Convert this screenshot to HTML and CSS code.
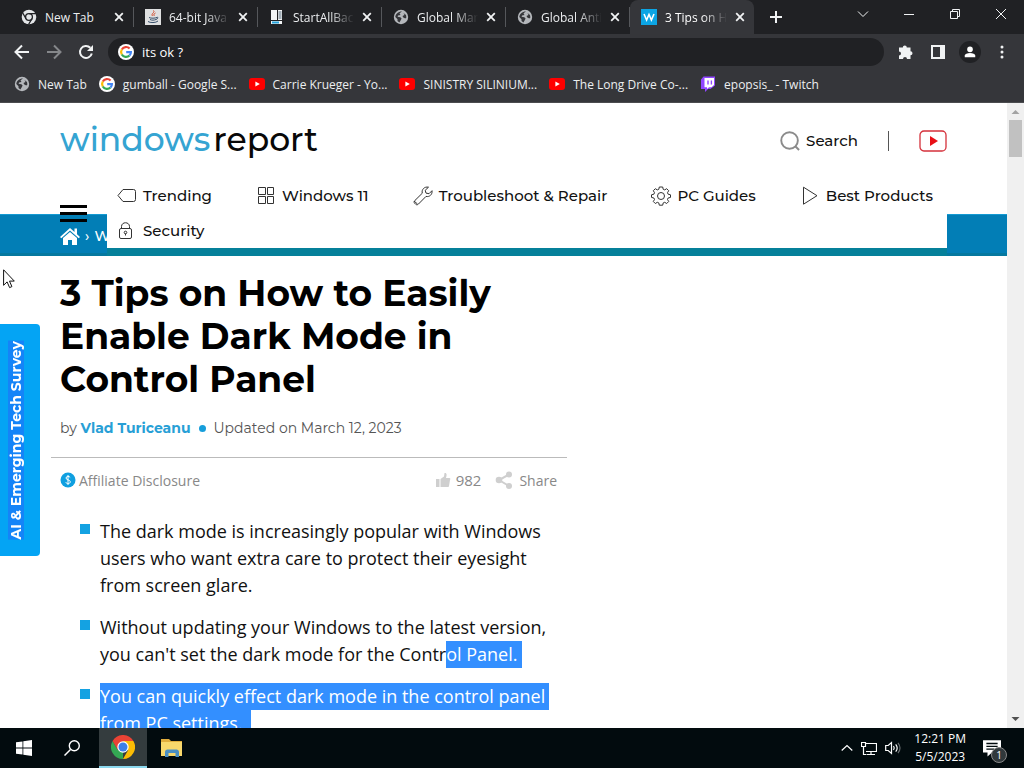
FILE: index.html
```html
<!DOCTYPE html>
<html lang="en">
<head>
<meta charset="utf-8">
<title>3 Tips on How to Easily Enable Dark Mode in Control Panel</title>
<link rel="stylesheet" href="styles.css">
</head>
<body>
<svg class="defs" aria-hidden="true">
  <symbol id="close" viewBox="0 0 10 10"><path d="M1.2 1.2 8.8 8.8M8.8 1.2 1.2 8.8" stroke="#f1f3f4" stroke-width="1.8" fill="none"/></symbol>
  <symbol id="globe" viewBox="0 0 16 16"><circle cx="8" cy="8" r="7.2" fill="#b4b7bb"/><path d="M9 2.500 6.500 4.200 7.500 6 5 6.500 4.600 7.800 7.400 8.200 8.600 9.600 7.600 11.600 6.400 13.500 4.500 12 4.500 10.200 2.300 8C2.500 5 5 2.500 9 2.500ZM10.500 4 13 6 13.400 8.500 12.300 9.500 10.300 8.400 9.500 7 11.500 6Z" fill="#35363a"/></symbol>
  <symbol id="google" viewBox="0 0 16 16"><circle cx="8" cy="8" r="8" fill="#fff"/><g fill="none" stroke-width="2.200"><path d="M11.600 4.500A4.900 4.900 0 0 0 3.800 5.500" stroke="#ea4335"/><path d="M3.800 5.500A4.900 4.900 0 0 0 3.800 10.500" stroke="#fbbc05"/><path d="M3.800 10.500A4.900 4.900 0 0 0 11.500 11.500" stroke="#34a853"/><path d="M11.500 11.500A4.900 4.900 0 0 0 12.900 8.200H8.200" stroke="#4285f4"/></g></symbol>
  <symbol id="youtube" viewBox="0 0 16 16"><rect y="2" width="16" height="12" rx="3" fill="#f00"/><path d="M6.400 5.500v5L10.800 8Z" fill="#fff"/></symbol>
</svg>

<header class="browser">
  <div class="tabstrip">
    <nav class="tabs" aria-label="Tabs">
      <div class="tab"><svg class="i16" viewBox="0 0 16 16"><circle cx="8" cy="8" r="7.300" fill="#e4e6e8"/><circle cx="8" cy="8" r="3.400" fill="#e4e6e8" stroke="#202124" stroke-width="1.300"/><path d="M8 4.600H15M5 9.700 1.600 3.800M11 9.700 7.500 15.500" stroke="#202124" stroke-width="1.300"/></svg><span class="tab-title">New Tab</span><button aria-label="Close tab"><svg viewBox="0 0 10 10"><use href="#close"/></svg></button></div>
      <div class="tab"><svg class="i16" viewBox="0 0 16 16"><path fill="#dfe0e1" d="M0 0h16v16H0z"/><path d="M8.500 1.500c2 2-3 3-1 5.500M10.500 4c-2 1-2 2-1 3" stroke="#d3492a" fill="none"/><path d="M4 8.500c2 1 6 .8 8 0M5 10.500c2 1 4 .8 6 0M3 12.500c2 1.500 8 1.500 10-.5M11.500 8.500c2-.8 2 1-.5 2" stroke="#39516c" fill="none"/></svg><span class="tab-title faded">64-bit Java</span><button aria-label="Close tab"><svg viewBox="0 0 10 10"><use href="#close"/></svg></button></div>
      <div class="tab"><svg class="i16" viewBox="0 0 16 16"><path fill="#f3f5f6" d="M2 1h6v10H2zM9 1h4v10H9zM2 12h11v3H2z"/><path d="M9.500 3h3M9.500 5h3M9.500 7h3M9.500 9h3" stroke="#53697a"/><path d="M3 13.500h7" stroke="#24a2da" stroke-width="2"/></svg><span class="tab-title faded">StartAllBack</span><button aria-label="Close tab"><svg viewBox="0 0 10 10"><use href="#close"/></svg></button></div>
      <div class="tab"><svg class="i16"><use href="#globe"/></svg><span class="tab-title faded">Global Mark</span><button aria-label="Close tab"><svg viewBox="0 0 10 10"><use href="#close"/></svg></button></div>
      <div class="tab"><svg class="i16"><use href="#globe"/></svg><span class="tab-title faded">Global Antiv</span><button aria-label="Close tab"><svg viewBox="0 0 10 10"><use href="#close"/></svg></button></div>
      <div class="tab active"><svg class="i16" viewBox="0 0 16 16"><path fill="#0ca5e4" d="M0 0h16v16H0z"/><path d="m3 5 2.600 6L8 5.500 10.400 11 13 5" stroke="#fff" stroke-width="1.600" fill="none"/></svg><span class="tab-title faded">3 Tips on H</span><button aria-label="Close tab"><svg viewBox="0 0 10 10"><use href="#close"/></svg></button></div>
      <button class="new-tab" aria-label="New tab"><svg viewBox="0 0 12 12"><path d="M6 0v12M0 6h12" stroke="#f1f3f4" stroke-width="2"/></svg></button>
    </nav>
    <div class="window-controls">
      <button aria-label="Search tabs"><svg viewBox="0 0 12 12"><path d="m1 3.500 5 5 5-5"/></svg></button>
      <button aria-label="Minimize"><svg viewBox="0 0 12 12"><path d="M1 6.500h10"/></svg></button>
      <button aria-label="Restore"><svg viewBox="0 0 12 12"><path d="M1.500 3.500h7v7h-7zM3.500 3.500v-2h7v7h-2"/></svg></button>
      <button aria-label="Close"><svg viewBox="0 0 12 12"><path d="m1 1 10 10M11 1 1 11"/></svg></button>
    </div>
  </div>
  <div class="toolbar">
    <button aria-label="Back"><svg viewBox="0 0 16 16"><path d="M15 8H2M8 1.500 1.500 8 8 14.500" stroke="#f1f3f4" stroke-width="2" fill="none"/></svg></button>
    <button aria-label="Forward"><svg viewBox="0 0 16 16"><path d="M1 8h13M8 1.500 14.500 8 8 14.500" stroke="#85878a" stroke-width="2" fill="none"/></svg></button>
    <button aria-label="Reload"><svg viewBox="0 0 16 16"><path d="M13.800 9.500A6 6 0 1 1 12.300 3.800" stroke="#f1f3f4" stroke-width="2" fill="none"/><path d="M15 1v6H9Z" fill="#f1f3f4"/></svg></button>
    <label class="omnibox"><svg class="i16"><use href="#google"/></svg><input type="text" value="its ok ?" aria-label="Address and search bar"></label>
    <div class="actions">
      <button aria-label="Extensions"><svg viewBox="0 0 16 16"><path fill="#f1f3f4" d="M4.800 3.500a2 2 0 0 1 4 0H12.500v3.700a2 2 0 0 1 0 4V15H9a2 2 0 0 0-4 0H1v-3.500a2 2 0 0 0 0-4v-4Z"/></svg></button>
      <button aria-label="Side panel"><svg viewBox="0 0 16 16"><path d="M2 2h12v12H2z" stroke="#f1f3f4" stroke-width="2" fill="none"/><path fill="#f1f3f4" d="M10 2h4v12h-4z"/></svg></button>
      <button class="profile" aria-label="Profile"><svg viewBox="0 0 16 16"><circle cx="8" cy="5" r="3.200" fill="#fff"/><path fill="#fff" d="M2 14v-2c0-4 12-4 12 0v2Z"/></svg></button>
      <button aria-label="Menu"><svg viewBox="0 0 16 16" fill="#f1f3f4"><circle cx="8" cy="3" r="1.500"/><circle cx="8" cy="8" r="1.500"/><circle cx="8" cy="13" r="1.500"/></svg></button>
    </div>
  </div>
  <nav class="bookmarks" aria-label="Bookmarks">
    <a href="#"><svg class="i16"><use href="#globe"/></svg>New Tab</a>
    <a href="#"><svg class="i16"><use href="#google"/></svg>gumball - Google S...</a>
    <a href="#"><svg class="i16"><use href="#youtube"/></svg>Carrie Krueger - Yo...</a>
    <a href="#"><svg class="i16"><use href="#youtube"/></svg>SINISTRY SILINIUM...</a>
    <a href="#"><svg class="i16"><use href="#youtube"/></svg>The Long Drive Co-...</a>
    <a href="#"><svg class="i16" viewBox="0 0 16 16"><path fill="#9146ff" d="M1 3.500 3.500.500H15v9L10.500 13H8l-3 3v-3H1Z"/><path fill="#fff" d="M4.500 2H14v7l-2.500 2.300H9L7 13v-1.700H4.500Z"/><path stroke="#9146ff" stroke-width="1.400" d="M8 4.500v4M11.400 4.500v4"/></svg>epopsis_ - Twitch</a>
  </nav>
</header>

<div class="viewport">
  <div class="page">
    <header class="site-header">
      <div class="masthead">
        <a class="logo" href="#"><span>windows</span>report</a>
        <div class="tools">
          <a class="search" href="#"><svg viewBox="0 0 22 22"><circle cx="10" cy="11" r="8.700"/><path d="m16 17 4 4"/></svg>Search</a>
          <span class="divider"></span>
          <a class="yt" href="#" aria-label="YouTube"><svg viewBox="0 0 28 22"><rect x="1" y="1" width="26" height="20" rx="4" fill="#fff" stroke="#d5313b" stroke-width="1.300"/><path d="M11 6v10l8-5Z" fill="#e80f16"/></svg></a>
        </div>
      </div>
      <div class="nav-row">
        <button class="hamburger" aria-label="Open menu"><span></span><span></span><span></span></button>
        <nav class="main-nav" aria-label="Main">
          <a href="#"><svg viewBox="0 0 20 20"><path d="M6 3.500h10.500a2 2 0 0 1 2 2v8a2 2 0 0 1-2 2H6L1 9.500Z"/></svg>Trending</a>
          <a href="#"><svg viewBox="0 0 20 20"><path d="M2.500 1.500h7v7h-7zM11.500 1.500h6v7h-6zM2.500 10.500h7v7h-7zM11.500 10.500h6v7h-6z"/></svg>Windows 11</a>
          <a href="#"><svg viewBox="0 0 20 20"><path d="m15.500 1.200-3.300 3.100.8 2.800 3 .600 3-3c.6 3.700-2.500 6.600-6 5.700L5.500 18c-1.200 1.200-2.300.8-2.900.2l-1-1c-.9-1-.5-2 .3-2.700l7.400-7.300C8.300 3.800 11.300.300 15.500 1.200ZM1 15l3.500 3"/></svg>Troubleshoot &amp; Repair</a>
          <a href="#"><svg viewBox="0 0 20 20"><path d="M8.300 1h3.400l.5 2.300 1.500.6 2-1.200 2 2-1.200 2 .6 1.500 2.400.6v2.600l-2.400.6-.6 1.500 1.200 2-2 2-2-1.200-1.500.6-.5 2.300H8.300l-.5-2.300-1.500-.6-2 1.200-2-2 1.200-2-.6-1.500-2.400-.6V8.800l2.400-.6.6-1.500-1.200-2 2-2 2 1.200 1.500-.6Z"/><circle cx="10" cy="10" r="3.500"/></svg>PC Guides</a>
          <a href="#"><svg viewBox="0 0 20 20"><path d="M3.500 1.200v17L17 9.700Z"/></svg>Best Products</a>
          <a href="#"><svg viewBox="0 0 20 20"><rect x="2.500" y="7.500" width="12" height="10" rx="1.500"/><path d="M4.500 7.500v-2c0-5 8-5 8 0v2M8.500 12.500v2"/><circle cx="8.500" cy="11.500" r="1.300"/></svg>Security</a>
        </nav>
      </div>
    </header>
    <div class="breadcrumb"><a href="#" aria-label="Home"><svg viewBox="0 0 20 18"><path fill="#fff" d="M10 1 0 10l1.300 1.300L10 3.600l8.700 7.700L20 10l-3-2.700V1.500h-2.500V5ZM3 11l7-6 7 6v7h-5v-5H8v5H3Z"/></svg></a><span>›</span><a href="#">W</a></div>

    <article>
      <h1>3 Tips on How to Easily Enable Dark Mode in Control Panel</h1>
      <p class="byline">by <a href="#">Vlad Turiceanu</a><span class="dot"></span><time datetime="2023-03-12">Updated on March 12, 2023</time></p>
      <div class="meta">
        <a class="disclosure" href="#"><svg viewBox="0 0 16 16"><circle cx="8" cy="8" r="7.500" fill="#0f9fe0"/><path d="M10.200 5.500C9.500 4 6 4 6 6c0 2.400 4.300 1.500 4.300 3.800 0 2.200-3.800 2.300-4.600.4M8 3v10" stroke="#fff" fill="none"/></svg>Affiliate Disclosure</a>
        <button class="likes"><svg viewBox="0 0 16 16" fill="#cfcfcf"><path d="M1 7h3.500v8H1zM5.500 7 9 4.500 9.500 1C12 .500 12 3 11 6h3.500c1 0 1 1.500.5 2l-1 6c0 1-1 1-2 1H5.500Z"/></svg>982</button>
        <button class="share"><svg viewBox="0 0 18 18" fill="#cfcfcf"><path d="m14 3.500-10 5.500 10 6" fill="none" stroke="#cfcfcf" stroke-width="2"/><circle cx="14" cy="3.500" r="3"/><circle cx="4" cy="9" r="3.300"/><circle cx="14" cy="15" r="3"/></svg>Share</button>
      </div>
      <ul class="summary">
        <li>The dark mode is increasingly popular with Windows users who want extra care to protect their eyesight from screen glare.</li>
        <li>Without updating your Windows to the latest version, you can't set the dark mode for the Contr<mark>ol Panel.</mark></li>
        <li><mark>You can quickly effect dark mode in the control panel from PC settings.&nbsp;</mark></li>
      </ul>
    </article>
  </div>
  <div class="scrollbar" aria-hidden="true">
    <svg viewBox="0 0 17 17"><path d="m4.500 11 4-4 4 4Z" fill="#a3a3a3"/></svg>
    <div class="thumb"></div>
    <svg viewBox="0 0 17 17"><path d="m4.500 6 4 4 4-4Z" fill="#505050"/></svg>
  </div>
  <button class="survey"><span>AI &amp; Emerging Tech Survey</span></button>
  <svg class="cursor" viewBox="0 0 12 20"><path d="M.6.800v15.500l3.500-3.400 2.500 5.700 2.300-1-2.400-5.500h4.800Z" fill="#fff" stroke="#111"/></svg>
</div>

<footer class="taskbar">
  <button aria-label="Start"><svg width="16" height="16" viewBox="0 0 16 16"><path fill="#fff" d="M0 2.300 6.500 1.400v6.200H0zM7.300 1.300 16 0v7.600H7.300zM0 8.400h6.500v6.200L0 13.700zM7.300 8.400H16V16l-8.700-1.300z"/></svg></button>
  <button aria-label="Search"><svg width="16" height="16" viewBox="0 0 16 16"><circle cx="10.300" cy="5.700" r="5" fill="none" stroke="#fff" stroke-width="1.400"/><path d="M6.500 9.500.5 15.500" stroke="#fff" stroke-width="1.500"/></svg></button>
  <button class="running" aria-label="Chrome"><svg width="24" height="24" viewBox="0 0 24 24"><path fill="#34a853" d="M12 12v12A12 12 0 0 1 1.600 6l5.200 9Z"/><path fill="#fbbc05" d="M12 6h10.400A12 12 0 0 1 12 24l5.200-9Z"/><path fill="#ea4335" d="M12 6h10.400A12 12 0 0 0 1.600 6l5.200 9Z"/><circle cx="12" cy="12" r="5.700" fill="#fff"/><circle cx="12" cy="12" r="4.500" fill="#3d7fe8"/></svg></button>
  <button aria-label="File Explorer"><svg width="24" height="24" viewBox="0 0 24 24"><path fill="#e2ae3d" d="M1 3h8l2 2h11v3H1Z"/><path fill="#f9d86c" d="M1 6h21v14H1z"/><path fill="#4b8fc3" d="M5 21v-5c0-1.500 1-2.500 2.500-2.500h9c1.500 0 2.500 1 2.500 2.500v5h-3.500v-4h-7v4Z"/></svg></button>
  <div class="tray">
    <svg width="12" height="16" viewBox="0 0 12 16"><path d="m.7 10.500 5.300-5 5.300 5"/></svg>
    <svg width="16" height="16" viewBox="0 0 16 16"><path d="M5 3.500h10.500v8H5M2.500 7v7.500h3M10 11.500v3M6 14.500h8M.500 2.500h4v4h-4z"/></svg>
    <svg width="16" height="16" viewBox="0 0 16 16"><path d="M.700 5.500h2.500l3.300-3v11l-3.300-3H.700ZM8.500 6q1.500 2 0 4M10.700 4.300q3 3.700 0 7.400"/><path d="M13 2.800q4 5.200 0 10.400" opacity=".4"/></svg>
    <div class="clock"><span>12:21 PM</span><span>5/5/2023</span></div>
    <button class="notifications" aria-label="Notifications"><svg width="18" height="18" viewBox="0 0 16 16"><path class="fill" d="M0 1h16v11H8l-4 3.500V12H0Z"/><path class="lines" d="M3 4h10M3 6.500h10M3 9h7"/></svg><span class="badge">1</span></button>
  </div>
</footer>
</body>
</html>
```
FILE: styles.css
```css
* { box-sizing: border-box; }
body { margin: 0; height: 100vh; display: flex; flex-direction: column; overflow: hidden; background: #fff; font-family: "Open Sans", "Noto Sans", sans-serif; }
button { margin: 0; padding: 0; border: 0; background: none; font: inherit; color: inherit; display: flex; align-items: center; justify-content: center; }
a { color: inherit; text-decoration: none; }
.defs { display: none; }
.i16 { width: 16px; height: 16px; flex: none; }

/* Browser frame */
.browser { flex: none; background: #35363a; color: #eceef0; font-size: 12px; border-bottom: 1px solid #4b4c4f; }
.tabstrip { display: flex; justify-content: space-between; height: 34px; background: #202124; }
.tabs { display: flex; padding-left: 10px; }
.tab { width: 124px; display: flex; align-items: center; gap: 8px; padding: 0 9px 0 11px; border-right: 1px solid #4a4c50; border-image: linear-gradient(transparent 8px, #55575b 8px, #55575b 26px, transparent 26px) 1; }
.tab.active { background: #35363a; border: 0; border-radius: 8px 8px 0 0; }
.tab-title { flex: 1; min-width: 0; white-space: nowrap; overflow: hidden; }
.tab.active .tab-title { color: #fff; }
.faded { -webkit-mask-image: linear-gradient(90deg, #000 60%, transparent); mask-image: linear-gradient(90deg, #000 60%, transparent); }
.tab svg:not(.i16) { width: 10px; height: 10px; }
.new-tab { width: 44px; }
.new-tab svg { width: 12px; height: 12px; }
.window-controls { display: flex; height: 28px; }
.window-controls button { width: 46px; }
.window-controls svg { width: 12px; height: 12px; fill: none; stroke: #f1f3f4; }
.toolbar { display: flex; align-items: center; height: 36px; padding: 0 6px; }
.toolbar button { width: 32px; height: 28px; }
.toolbar button svg { width: 16px; height: 16px; }
.omnibox { flex: 1; display: flex; align-items: center; gap: 8px; height: 28px; margin: 0 6px; padding: 0 10px; border-radius: 14px; background: #202124; }
.omnibox input { flex: 1; min-width: 0; border: 0; padding: 0; background: none; color: #fff; font: 13px "Open Sans", sans-serif; outline: 0; }
.actions { display: flex; }
.toolbar .profile { width: 22px; height: 22px; margin: 3px 5px; border-radius: 50%; background: #202124; }
.toolbar .profile svg { width: 14px; height: 14px; }
.bookmarks { display: flex; align-items: center; gap: 12px; height: 32px; padding: 0 14px 4px; white-space: nowrap; }
.bookmarks a { display: flex; align-items: center; gap: 8px; }

/* Page */
.viewport { flex: 1; min-height: 0; display: flex; position: relative; }
.page { flex: 1; min-width: 0; overflow: hidden; color: #111; }
.site-header { position: relative; z-index: 1; padding: 0 60px; font-family: Montserrat, Inter, sans-serif; }
.masthead { display: flex; justify-content: space-between; align-items: center; height: 75px; }
.logo { padding-bottom: 4px; font: 500 33px/48px Montserrat, Lato, sans-serif; color: #080808; }
.logo span { color: #35a4d2; margin-right: 3px; }
.tools { display: flex; align-items: center; gap: 30px; font-size: 15px; font-weight: 500; }
.search { display: flex; align-items: center; gap: 5px; }
.search svg { width: 21px; height: 21px; fill: none; stroke: #8b8b8b; stroke-width: 2; }
.divider { width: 1px; height: 20px; background: #555; }
.yt svg { display: block; width: 28px; height: 22px; }
.nav-row { display: flex; align-items: center; gap: 20px; }
.hamburger { flex: none; width: 27px; flex-direction: column; gap: 4px; }
.hamburger span { width: 100%; height: 3px; background: #000; }
.main-nav { flex: 1; display: flex; flex-wrap: wrap; column-gap: 44px; padding: 0 10px; background: #fff; box-shadow: 0 8px 0 #05809a; font-size: 15px; font-weight: 500; line-height: 35px; white-space: nowrap; }
.main-nav a { display: flex; align-items: center; gap: 6px; }
.main-nav svg { width: 20px; height: 20px; fill: none; stroke: #333; stroke-width: 1; }
.breadcrumb { display: flex; align-items: center; gap: 5px; height: 42px; margin-top: -34px; padding: 3px 60px 0; background: #027eb6; border-top: 1px solid #159ad2; border-bottom: 3px solid #05789f; color: #fff; font: 500 14px Montserrat, sans-serif; }
.breadcrumb svg { display: block; width: 20px; height: 18px; }

/* Article */
article { max-width: 576px; padding: 16px 9px 0 60px; }
h1 { margin: 0; max-width: 460px; font: 700 36px/43px Montserrat, Inter, sans-serif; color: #000; }
.byline { display: flex; align-items: center; margin: 15px 0 17px; font: 14px/24px Montserrat, Inter, sans-serif; color: #555; white-space: pre; }
.byline a { color: #289fd6; font-weight: 700; }
.dot { width: 7px; height: 7px; margin: 0 8px; border-radius: 50%; background: #169edb; }
.meta { display: flex; align-items: center; height: 47px; margin-left: -9px; padding: 0 10px 2px 9px; border-top: 1px solid #bbb; color: #888; font-size: 14px; }
.meta svg { width: 16px; height: 16px; }
.disclosure { display: flex; align-items: center; gap: 3px; margin-right: auto; }
.likes { gap: 5px; font-size: 15px; }
.share { gap: 6px; margin-left: 14px; }
.meta .share svg { width: 18px; height: 18px; }
.summary { list-style: none; margin: 14px 0 0; padding: 0 0 0 40px; font-size: 18px; line-height: 27px; font-weight: 400; }
.summary li { margin-bottom: 15px; }
.summary li::before { content: ""; float: left; width: 10px; height: 10px; margin: 6px 0 0 -20px; background: #14a2e2; }
mark { background: #338fff; color: #fff; padding: 1px 4px 2px 0; -webkit-box-decoration-break: clone; box-decoration-break: clone; }
.scrollbar { flex: none; width: 17px; display: flex; flex-direction: column; background: #f0f0f0; }
.scrollbar svg { width: 17px; height: 17px; }
.thumb { height: 37px; margin: 0 2px auto; background: #c1c1c1; }
.survey { position: absolute; left: 0; top: 221px; width: 40px; height: 232px; padding-right: 8px; border-radius: 0 4px 4px 0; background: #04a4f4; color: #fff; font: 700 14px/16px Montserrat, Inter, sans-serif; }
.survey span { writing-mode: vertical-rl; transform: rotate(180deg); background: #1484f8; white-space: nowrap; }
.cursor { position: absolute; left: 3px; top: 166px; width: 12px; height: 20px; }

/* Taskbar */
.taskbar { flex: none; display: flex; height: 40px; background: #020b0e; color: #fff; font-size: 12px; }
.taskbar > button { width: 48px; }
.taskbar .running { margin: 0 1px 0 3px; background: #343c3e; border-bottom: 2px solid #8bd8ee; }
.tray { display: flex; align-items: center; gap: 8px; margin-left: auto; padding-right: 23px; }
.tray svg { fill: none; stroke: #fff; stroke-width: 1.2; }
.tray .fill { fill: #fff; stroke: none; }
.tray .lines { stroke: #020b0e; }
.clock { display: flex; flex-direction: column; align-items: center; line-height: 18px; margin: 0 9px 0 5px; }
.notifications { position: relative; }
.badge { position: absolute; left: 8px; top: 8px; width: 16px; height: 16px; border: 1px solid #888; border-radius: 50%; background: #30383b; font-size: 10px; line-height: 14px; text-align: center; }
```
